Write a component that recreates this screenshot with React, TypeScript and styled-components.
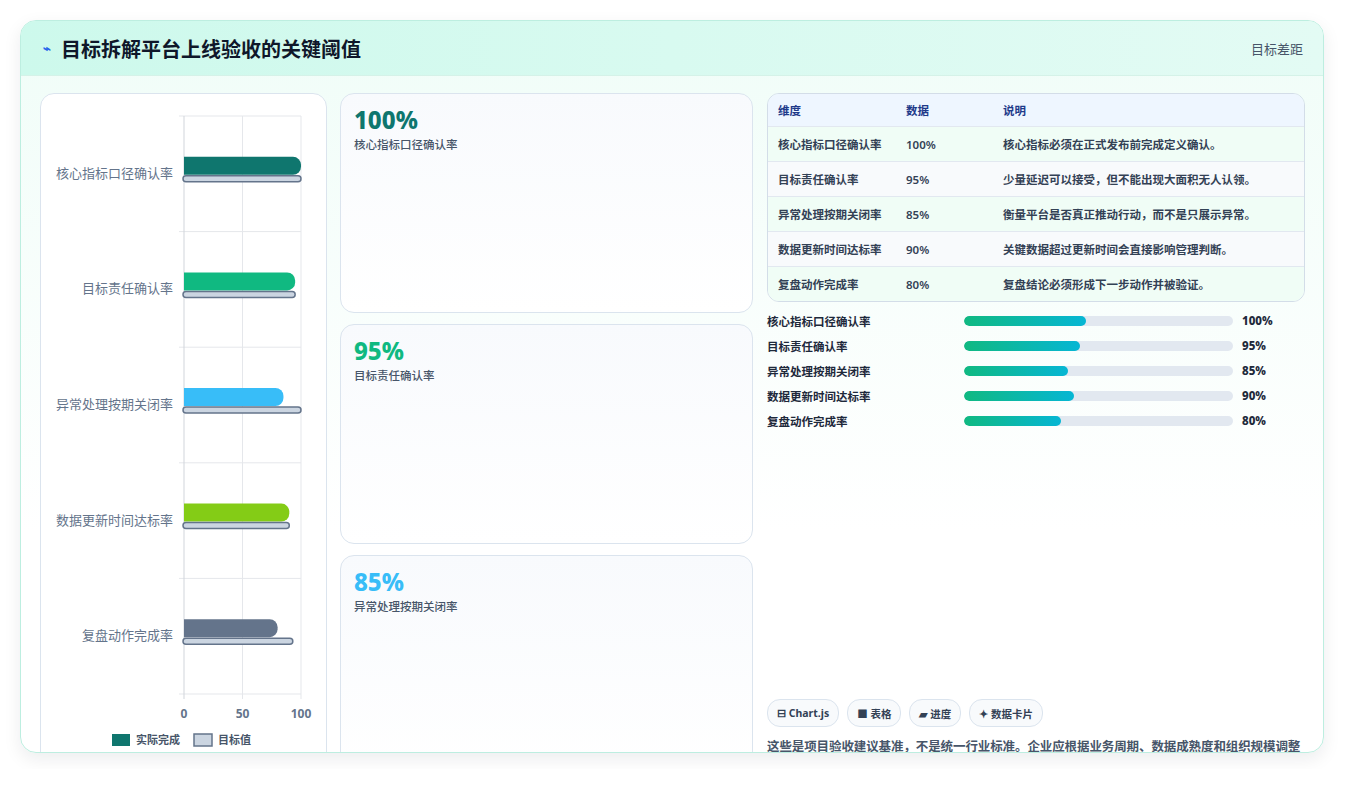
import styled, { createGlobalStyle } from "styled-components";

const GlobalStyle = createGlobalStyle`
  html, body { margin: 0; padding: 0; background: #ffffff; }
  body { font-family: "Noto Sans", "Noto Sans CJK SC", sans-serif; }
`;

const rows = [
  { name: "核心指标口径确认率", value: 100, target: 100, color: "#0f766e", note: "核心指标必须在正式发布前完成定义确认。" },
  { name: "目标责任确认率", value: 95, target: 95, color: "#10b981", note: "少量延迟可以接受，但不能出现大面积无人认领。" },
  { name: "异常处理按期关闭率", value: 85, target: 100, color: "#38bdf8", note: "衡量平台是否真正推动行动，而不是只展示异常。" },
  { name: "数据更新时间达标率", value: 90, target: 90, color: "#84cc16", note: "关键数据超过更新时间会直接影响管理判断。" },
  { name: "复盘动作完成率", value: 80, target: 93, color: "#64748b", note: "复盘结论必须形成下一步动作并被验证。" },
];

const Page = styled.div`
  padding: 20px 21px 16px 20px;
`;

const Frame = styled.div`
  border: 1px solid #bdeee0;
  border-radius: 16px;
  overflow: hidden;
  background: linear-gradient(180deg, #f0fdf8 0%, #ffffff 70%);
  box-shadow: 0 6px 18px rgba(15, 23, 42, 0.08);
`;

const Header = styled.div`
  height: 54px;
  display: flex;
  align-items: center;
  justify-content: space-between;
  padding: 0 20px 0 22px;
  background: linear-gradient(90deg, #cdf9ec 0%, #e3fbf4 100%);
  border-bottom: 1px solid #d5f2e8;
`;

const Title = styled.h1`
  margin: 0;
  font-size: 20px;
  font-weight: 700;
  color: #0f172a;
  display: flex;
  align-items: center;
  gap: 10px;
`;

const Spark = styled.span`
  color: #2563eb;
  font-size: 13px;
`;

const HeaderTag = styled.span`
  font-size: 13px;
  color: #475569;
`;

const Body = styled.div`
  display: grid;
  grid-template-columns: 287px 413px 1fr;
  gap: 13px;
  padding: 17px 18px 18px 19px;
  height: 676px;
  box-sizing: border-box;
`;

const Card = styled.div`
  background: linear-gradient(180deg, #f8fafd 0%, #ffffff 100%);
  border: 1px solid #dbe4ee;
  border-radius: 14px;
`;

const ChartCard = styled(Card)`
  background: #ffffff;
`;

const MidCol = styled.div`
  display: grid;
  grid-template-rows: 1fr 1fr 1fr;
  gap: 11px;
`;

const StatCard = styled(Card)`
  padding: 10px 13px;
`;

const StatValue = styled.div<{ $color: string }>`
  font-size: 24px;
  font-weight: 800;
  line-height: 32px;
  color: ${(p) => p.$color};
`;

const StatLabel = styled.div`
  font-size: 11.5px;
  color: #475569;
  font-weight: 500;
`;

const RightCol = styled.div`
  display: flex;
  flex-direction: column;
  padding-left: 1px;
`;

const Table = styled.div`
  border: 1px solid #d3dde8;
  border-radius: 12px;
  overflow: hidden;
`;

const TRow = styled.div<{ $bg: string; $head?: boolean }>`
  display: grid;
  grid-template-columns: 128px 97px 1fr;
  padding-left: 10px;
  height: ${(p) => (p.$head ? "32px" : "34px")};
  align-items: center;
  background: ${(p) => p.$bg};
  border-top: ${(p) => (p.$head ? "none" : "1px solid #e2e8f0")};
  font-size: 11.5px;
  font-weight: ${(p) => (p.$head ? 700 : 600)};
  color: ${(p) => (p.$head ? "#1e3a8a" : "#334155")};
`;

const Bars = styled.div`
  display: flex;
  flex-direction: column;
  gap: 6px;
  margin-top: 9px;
`;

const BarRow = styled.div`
  display: grid;
  grid-template-columns: 197px 269px 1fr;
  align-items: center;
  height: 19px;
  font-size: 11.5px;
  font-weight: 600;
  color: #1e293b;
`;

const Track = styled.div`
  height: 10px;
  border-radius: 5px;
  background: #e2e8f0;
  overflow: hidden;
`;

const Fill = styled.div`
  height: 100%;
  border-radius: 5px;
  background: linear-gradient(90deg, #10b981, #06b6d4);
`;

const BarValue = styled.span`
  padding-left: 9px;
  font-weight: 800;
`;

const Spacer = styled.div`
  flex: 1;
`;

const Chips = styled.div`
  display: flex;
  gap: 8px;
`;

const Chip = styled.span`
  height: 26px;
  padding: 0 9px;
  border: 1px solid #dbe4ee;
  border-radius: 13px;
  background: #f8fafc;
  display: inline-flex;
  align-items: center;
  gap: 4px;
  font-size: 10.5px;
  font-weight: 700;
  color: #334155;
`;

const Note = styled.p`
  margin: 10px 0 0;
  padding-right: 4px;
  font-size: 12.5px;
  line-height: 19px;
  font-weight: 600;
  color: #475569;
  letter-spacing: -0.1px;
`;

const X0 = 143;
const XW = 117;
const Y0 = 22;
const RH = 115.6;

function Chart() {
  return (
    <svg width="287" height="675" viewBox="0 0 287 675">
      {[0, 1, 2, 3, 4, 5].map((i) => (
        <line key={"h" + i} x1={X0 - 5} x2={X0 + XW} y1={Y0 + i * RH} y2={Y0 + i * RH} stroke="#e5e7eb" />
      ))}
      {[0, 0.5, 1].map((f) => (
        <line key={"v" + f} x1={X0 + f * XW} x2={X0 + f * XW} y1={Y0} y2={Y0 + 5 * RH + 5} stroke={f === 0 ? "#d1d5db" : "#e5e7eb"} />
      ))}
      {rows.map((r, i) => {
        const cy = Y0 + i * RH + RH / 2;
        const w = (r.value / 100) * XW;
        const tw = (r.target / 100) * XW;
        return (
          <g key={r.name}>
            <text x={X0 - 11} y={cy + 4} textAnchor="end" fontSize="13" fill="#64748b">{r.name}</text>
            <path d={`M${X0} ${cy - 17} H${X0 + w - 8} a8 8 0 0 1 8 8 v2 a8 8 0 0 1 -8 8 H${X0} Z`} fill={r.color} />
            <rect x={X0 - 1} y={cy + 2} width={tw + 1} height={6} rx={3} fill="#cbd5e1" stroke="#64748b" strokeWidth="1.5" />
          </g>
        );
      })}
      {[0, 50, 100].map((v) => (
        <text key={v} x={X0 + (v / 100) * XW} y={624} textAnchor="middle" fontSize="12" fontWeight="700" fill="#64748b">{v}</text>
      ))}
      <rect x={71} y={640} width={18} height={12} fill="#0f766e" />
      <text x={95} y={650} fontSize="11" fontWeight="600" fill="#475569">实际完成</text>
      <rect x={153} y={640} width={18} height={12} fill="#cbd5e1" stroke="#64748b" strokeWidth="1.5" />
      <text x={177} y={650} fontSize="11" fontWeight="600" fill="#475569">目标值</text>
    </svg>
  );
}

export default function App() {
  return (
    <>
      <GlobalStyle />
      <Page>
        <Frame>
          <Header>
            <Title>
              <Spark>⌁</Spark>目标拆解平台上线验收的关键阈值
            </Title>
            <HeaderTag>目标差距</HeaderTag>
          </Header>
          <Body>
            <ChartCard>
              <Chart />
            </ChartCard>
            <MidCol>
              {rows.slice(0, 3).map((r) => (
                <StatCard key={r.name}>
                  <StatValue $color={r.color}>{r.value}%</StatValue>
                  <StatLabel>{r.name}</StatLabel>
                </StatCard>
              ))}
            </MidCol>
            <RightCol>
              <Table>
                <TRow $head $bg="#eef6ff">
                  <span>维度</span>
                  <span>数据</span>
                  <span>说明</span>
                </TRow>
                {rows.map((r, i) => (
                  <TRow key={r.name} $bg={i % 2 === 0 ? "#f0fdf6" : "#f8fafc"}>
                    <span>{r.name}</span>
                    <span>{r.value}%</span>
                    <span>{r.note}</span>
                  </TRow>
                ))}
              </Table>
              <Bars>
                {rows.map((r) => (
                  <BarRow key={r.name}>
                    <span>{r.name}</span>
                    <Track>
                      <Fill style={{ width: `${r.value * 0.453}%` }} />
                    </Track>
                    <BarValue>{r.value}%</BarValue>
                  </BarRow>
                ))}
              </Bars>
              <Spacer />
              <Chips>
                <Chip>⊟ Chart.js</Chip>
                <Chip>■ 表格</Chip>
                <Chip>▰ 进度</Chip>
                <Chip>✦ 数据卡片</Chip>
              </Chips>
              <Note>这些是项目验收建议基准，不是统一行业标准。企业应根据业务周期、数据成熟度和组织规模调整阈值。</Note>
            </RightCol>
          </Body>
        </Frame>
      </Page>
    </>
  );
}
